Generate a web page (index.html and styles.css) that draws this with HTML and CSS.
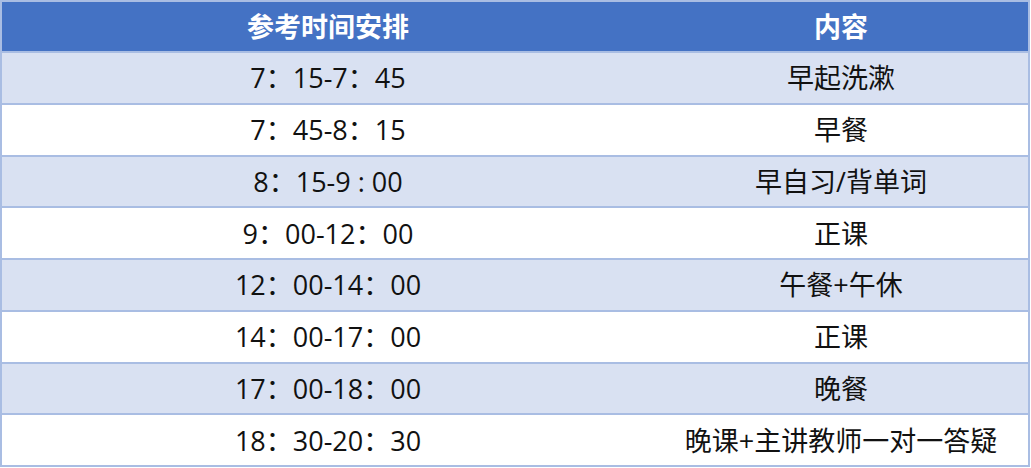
FILE: index.html
```html
<!DOCTYPE html>
<html lang="zh-CN">
<head>
<meta charset="utf-8">
<link rel="stylesheet" href="styles.css">
</head>
<body>
<table class="schedule">
  <thead>
    <tr><th class="c-time">参考时间安排</th><th class="c-item">内容</th></tr>
  </thead>
  <tbody>
    <tr><td class="num">7：15-7：45</td><td>早起洗漱</td></tr>
    <tr><td class="num">7：45-8：15</td><td>早餐</td></tr>
    <tr><td class="num">8：15-9 : 00</td><td>早自习/背单词</td></tr>
    <tr><td class="num">9：00-12：00</td><td>正课</td></tr>
    <tr><td class="num">12：00-14：00</td><td>午餐+午休</td></tr>
    <tr><td class="num">14：00-17：00</td><td>正课</td></tr>
    <tr><td class="num">17：00-18：00</td><td>晚餐</td></tr>
    <tr><td class="num">18：30-20：30</td><td>晚课+主讲教师一对一答疑</td></tr>
  </tbody>
</table>
</body>
</html>
```
FILE: styles.css
```css
html, body {
  margin: 0;
  padding: 0;
  background: #ffffff;
}
.schedule {
  width: 1030px;
  border-collapse: collapse;
  table-layout: fixed;
  font-family: "Open Sans", "Noto Sans CJK SC", sans-serif;
  font-size: 27px;
  color: #111111;
  border: 2px solid #a9bde3;
}
.schedule th,
.schedule td {
  height: 49.75px;
  padding: 0;
  text-align: center;
  vertical-align: middle;
  border-top: 2px solid #a9bde3;
  line-height: 1;
}
.schedule .c-time { width: 652px; }
.schedule thead th {
  height: 49px;
  background: #4472c4;
  color: #ffffff;
  font-weight: bold;
  border-top: 1px solid #6f92d2;
}
.schedule tbody tr:nth-child(odd) td { background: #d9e1f2; }
.schedule tbody tr:nth-child(even) td { background: #ffffff; }
```
